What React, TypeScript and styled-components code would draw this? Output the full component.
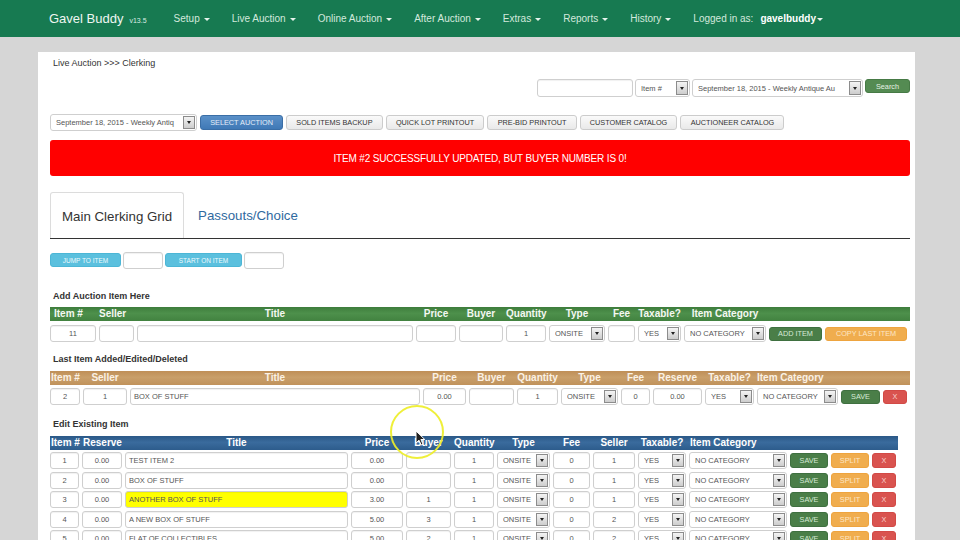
import React from 'react';
import styled, { createGlobalStyle, css } from 'styled-components';

const Global = createGlobalStyle`
  html, body { margin: 0; padding: 0; background: #d6d6d6; }
  body { font-family: "Liberation Sans", Arial, sans-serif; width: 960px; height: 540px; overflow: hidden; }
  * { box-sizing: border-box; }
`;

const Root = styled.div`
  position: relative;
  width: 960px;
  height: 540px;
  overflow: hidden;
`;

/* ---------- navbar ---------- */
const Nav = styled.nav`
  height: 37px;
  background: #177a51;
  display: flex;
  align-items: center;
  padding-left: 49px;
`;
const Brand = styled.div`
  display: flex;
  align-items: baseline;
  color: #eef6f1;
  font-size: 13px;
  margin-right: 16px;
`;
const Version = styled.span`
  font-size: 7px;
  margin-left: 6px;
  color: #d9ece2;
`;
const NavItem = styled.div`
  display: flex;
  align-items: center;
  gap: 4px;
  padding: 0 11px;
  font-size: 10px;
  color: #d3e9dd;
  white-space: nowrap;
  b { color: #ffffff; margin-left: 3px; }
`;
const Caret = styled.span<{ $tight?: boolean }>`
  display: inline-block;
  width: 0;
  height: 0;
  border-left: 3px solid transparent;
  border-right: 3px solid transparent;
  border-top: 3px solid #e6f3ec;
  margin-left: ${p => (p.$tight ? '-3px' : '0')};
  margin-top: 1px;
`;

/* ---------- page ---------- */
const Page = styled.div`
  padding: 15px 45px 0 38px;
`;
const Panel = styled.div`
  background: #ffffff;
  height: 500px;
  padding: 5px 5px 0 12px;
  display: flex;
  flex-direction: column;
`;
const Breadcrumb = styled.div`
  font-size: 9px;
  line-height: 12px;
  color: #333;
  padding-left: 3px;
`;
const SearchRow = styled.div`
  margin-top: 10px;
  display: flex;
  justify-content: flex-end;
  align-items: flex-start;
  gap: 2px;
  height: 18px;
`;
const Toolbar = styled.div`
  margin-top: 17px;
  display: flex;
  align-items: center;
  height: 17px;
  gap: 3px;
`;
const Alert = styled.div`
  margin-top: 9px;
  height: 36px;
  background: #ff0000;
  border-radius: 3px;
  color: #fff;
  font-size: 10px;
  display: flex;
  align-items: center;
  justify-content: center;
  letter-spacing: -0.15px;
`;
const TabBar = styled.div`
  margin-top: 16px;
  display: flex;
  border-bottom: 1px solid #333;
  height: 47px;
`;
const Tab = styled.div<{ $active?: boolean }>`
  height: 46px;
  line-height: 47px;
  padding: 0 ${p => (p.$active ? '11px' : '14px')};
  font-size: 13.3px;
  color: ${p => (p.$active ? '#333' : '#2f6aa0')};
  ${p =>
    p.$active &&
    css`
      border: 1px solid #dcdcdc;
      border-bottom: none;
      border-radius: 3px 3px 0 0;
      background: #fff;
    `}
`;
const JumpRow = styled.div`
  margin-top: 12px;
  display: flex;
  align-items: center;
  height: 18px;
  gap: 2px;
`;
const SectionTitle = styled.div<{ $mt: number }>`
  margin-top: ${p => p.$mt}px;
  font-size: 9px;
  line-height: 12px;
  font-weight: bold;
  color: #333;
  padding-left: 3px;
`;

/* ---------- grid tables ---------- */
const themes = {
  green: { bg: 'linear-gradient(#3e7d3c, #4d904b 45%, #428240)', fg: '#f4f8f2' },
  tan: { bg: 'linear-gradient(#bf8f57, #c99f6a 45%, #c0925b)', fg: '#fbf1e4' },
  blue: { bg: 'linear-gradient(#2a5887, #3a6b9d 45%, #2d5c8c)', fg: '#ffffff' },
};
type ThemeKey = keyof typeof themes;

const HeadBar = styled.div<{ $cols: string; $theme: ThemeKey; $mt: number; $w?: number }>`
  margin-top: ${p => p.$mt}px;
  height: 14px;
  width: ${p => (p.$w ? `${p.$w}px` : '100%')};
  display: grid;
  grid-template-columns: ${p => p.$cols};
  column-gap: 3px;
  align-items: center;
  background: ${p => themes[p.$theme].bg};
  color: ${p => themes[p.$theme].fg};
  font-size: 10px;
  font-weight: bold;
`;
const HeadCell = styled.div<{ $align?: 'left' | 'center'; $pad?: number }>`
  text-align: ${p => p.$align || 'center'};
  padding-left: ${p => p.$pad || 0}px;
  white-space: nowrap;
  line-height: 14px;
`;
const Row = styled.div<{ $cols: string; $mt: number; $h?: number }>`
  margin-top: ${p => p.$mt}px;
  height: ${p => p.$h || 17}px;
  display: grid;
  grid-template-columns: ${p => p.$cols};
  column-gap: 3px;
  align-items: center;
`;
const Rows = styled.div`
  display: flex;
  flex-direction: column;
  gap: 2px;
  margin-top: 2px;
`;

/* ---------- controls ---------- */
const Field = styled.input<{ $align?: 'left' | 'center'; $hl?: boolean; $w?: number; $h?: number }>`
  width: ${p => (p.$w ? `${p.$w}px` : '100%')};
  height: ${p => p.$h || 17}px;
  border: 1px solid #cfcfcf;
  border-radius: 3px;
  background: ${p => (p.$hl ? '#ffff00' : '#ffffff')};
  box-shadow: inset 0 1px 1px rgba(0, 0, 0, 0.06);
  font-family: "Liberation Sans", Arial, sans-serif;
  font-size: 7.5px;
  color: #555;
  text-align: ${p => p.$align || 'center'};
  padding: 0 ${p => (p.$align === 'left' ? '3px' : '2px')};
  outline: none;
  margin: 0;
`;
const SelectBox = styled.div<{ $w?: number; $h?: number }>`
  width: ${p => (p.$w ? `${p.$w}px` : '100%')};
  height: ${p => p.$h || 17}px;
  border: 1px solid #cfcfcf;
  border-radius: 3px;
  background: #fff;
  display: flex;
  align-items: center;
  padding: 1px 1px 1px 5px;
  font-size: 7.5px;
  color: #555;
  white-space: nowrap;
  span { flex: 1; overflow: hidden; text-overflow: clip; }
`;
const ArrowBtn = styled.div`
  flex: none;
  width: 12px;
  height: 100%;
  border: 1px solid #8c8c8c;
  background: linear-gradient(#f4f4f4, #cdcdcd);
  display: flex;
  align-items: center;
  justify-content: center;
  &::after {
    content: '';
    border-left: 2.5px solid transparent;
    border-right: 2.5px solid transparent;
    border-top: 3px solid #222;
  }
`;

const Select: React.FC<{ value: string; w?: number; h?: number }> = ({ value, w, h }) => (
  <SelectBox $w={w} $h={h}>
    <span>{value}</span>
    <ArrowBtn />
  </SelectBox>
);

const variants = {
  default: css`
    background: linear-gradient(#fafafa, #e9e9e9);
    border: 1px solid #cccccc;
    color: #333;
  `,
  primary: css`
    background: linear-gradient(#5a90c8, #4079b6);
    border: 1px solid #3a6ea6;
    color: #e4eef8;
  `,
  success: css`
    background: #4a7e48;
    border: 1px solid #3f7040;
    color: #d7ead6;
  `,
  search: css`
    background: #548b52;
    border: 1px solid #467a45;
    color: #e5f1e4;
  `,
  warning: css`
    background: #f0ad4e;
    border: 1px solid #eea43f;
    color: #fde6c6;
  `,
  danger: css`
    background: #d9534f;
    border: 1px solid #d24a46;
    color: #f7d0cf;
  `,
  info: css`
    background: #5bc0de;
    border: 1px solid #4cb6d6;
    color: #eef9fc;
  `,
};
type Variant = keyof typeof variants;

const Btn = styled.button<{ $v: Variant; $h?: number; $w?: number; $fs?: number; $caps?: boolean }>`
  ${p => variants[p.$v]}
  height: ${p => p.$h || 15}px;
  ${p => p.$w && `width: ${p.$w}px;`}
  padding: 0 9.2px;
  border-radius: 3px;
  font-family: "Liberation Sans", Arial, sans-serif;
  font-size: ${p => p.$fs || 7.3}px;
  text-transform: ${p => (p.$caps === false ? 'none' : 'uppercase')};
  white-space: nowrap;
  display: flex;
  align-items: center;
  justify-content: center;
  margin: 0;
`;

/* ---------- overlay (screen recording cursor highlight) ---------- */
const Highlight = styled.div`
  position: absolute;
  left: 390px;
  top: 405px;
  width: 54px;
  height: 54px;
  border-radius: 50%;
  border: 2.5px solid rgba(238, 238, 40, 0.92);
  pointer-events: none;
`;
const CursorIcon = styled.svg`
  position: absolute;
  left: 415px;
  top: 430px;
`;

/* ---------- data ---------- */
const addCols = '46px 35px 276px 40px 44px 40px 56px 27px 43px 82px 53px 82px';
const lastCols = '30px 44px 290px 43px 45px 41px 57px 29px 49px 49px 81px 39px 24px';
const editCols = '29px 40px 223px 52px 45px 40px 53px 37px 42px 48px 98px 38px 38px 24px';

type H = [string, ('left' | 'center')?, number?];
const addHeads: H[] = [
  ['Item #', 'left', 4], ['Seller', 'left', 0], ['Title'], ['Price'], ['Buyer'], ['Quantity'],
  ['Type'], ['Fee'], ['Taxable?'], ['Item Category'],
];
const lastHeads: H[] = [
  ['Item #', 'left', 1], ['Seller'], ['Title'], ['Price'], ['Buyer'], ['Quantity'], ['Type'],
  ['Fee'], ['Reserve'], ['Taxable?'], ['Item Category', 'left', 0],
];
const editHeads: H[] = [
  ['Item #', 'left', 1], ['Reserve', 'left', 1], ['Title'], ['Price'], ['Buyer'], ['Quantity'],
  ['Type'], ['Fee'], ['Seller'], ['Taxable?'], ['Item Category', 'left', 1],
];

const editRows = [
  { n: '1', title: 'TEST ITEM 2', price: '0.00', buyer: '', seller: '1' },
  { n: '2', title: 'BOX OF STUFF', price: '0.00', buyer: '', seller: '1' },
  { n: '3', title: 'ANOTHER BOX OF STUFF', price: '3.00', buyer: '1', seller: '1', hl: true },
  { n: '4', title: 'A NEW BOX OF STUFF', price: '5.00', buyer: '3', seller: '2' },
  { n: '5', title: 'FLAT OF COLLECTIBLES', price: '5.00', buyer: '2', seller: '2' },
];

const Heads: React.FC<{ heads: H[] }> = ({ heads }) => (
  <>
    {heads.map(([t, a, p]) => (
      <HeadCell key={t} $align={a} $pad={p}>
        {t}
      </HeadCell>
    ))}
  </>
);

const navItems = ['Setup', 'Live Auction', 'Online Auction', 'After Auction', 'Extras', 'Reports', 'History'];

export default function App() {
  return (
    <Root>
      <Global />
      <Nav>
        <Brand>
          Gavel Buddy<Version>v13.5</Version>
        </Brand>
        {navItems.map(n => (
          <NavItem key={n}>
            {n}
            <Caret />
          </NavItem>
        ))}
        <NavItem>
          Logged in as:<b>gavelbuddy</b>
          <Caret $tight />
        </NavItem>
      </Nav>

      <Page>
        <Panel>
          <Breadcrumb>Live Auction &gt;&gt;&gt; Clerking</Breadcrumb>

          <SearchRow>
            <Field readOnly defaultValue="" $w={96} $h={18} />
            <Select value="Item #" w={55} h={18} />
            <Select value="September 18, 2015 - Weekly Antique Au" w={171} h={18} />
            <Btn $v="search" $h={14} $w={45} $caps={false}>
              Search
            </Btn>
          </SearchRow>

          <Toolbar>
            <Select value="September 18, 2015 - Weekly Antiq" w={147} h={17} />
            <Btn $v="primary">Select Auction</Btn>
            <Btn $v="default">Sold Items Backup</Btn>
            <Btn $v="default">Quick Lot Printout</Btn>
            <Btn $v="default">Pre-Bid Printout</Btn>
            <Btn $v="default">Customer Catalog</Btn>
            <Btn $v="default">Auctioneer Catalog</Btn>
          </Toolbar>

          <Alert>ITEM #2 SUCCESSFULLY UPDATED, BUT BUYER NUMBER IS 0!</Alert>

          <TabBar>
            <Tab $active>Main Clerking Grid</Tab>
            <Tab>Passouts/Choice</Tab>
          </TabBar>

          <JumpRow>
            <Btn $v="info" $h={14} $w={71} $fs={6.5}>Jump to item</Btn>
            <Field readOnly defaultValue="" $w={40} />
            <Btn $v="info" $h={14} $w={77} $fs={6.5}>Start on item</Btn>
            <Field readOnly defaultValue="" $w={40} />
          </JumpRow>

          <SectionTitle $mt={21}>Add Auction Item Here</SectionTitle>
          <HeadBar $cols={addCols} $theme="green" $mt={5}>
            <Heads heads={addHeads} />
          </HeadBar>
          <Row $cols={addCols} $mt={4}>
            <Field readOnly defaultValue="11" />
            <Field readOnly defaultValue="" />
            <Field readOnly defaultValue="" $align="left" />
            <Field readOnly defaultValue="" />
            <Field readOnly defaultValue="" />
            <Field readOnly defaultValue="1" />
            <Select value="ONSITE" />
            <Field readOnly defaultValue="" />
            <Select value="YES" />
            <Select value="NO CATEGORY" />
            <Btn $v="success" $h={14}>Add Item</Btn>
            <Btn $v="warning" $h={14}>Copy Last Item</Btn>
          </Row>

          <SectionTitle $mt={11}>Last Item Added/Edited/Deleted</SectionTitle>
          <HeadBar $cols={lastCols} $theme="tan" $mt={6}>
            <Heads heads={lastHeads} />
          </HeadBar>
          <Row $cols={lastCols} $mt={3}>
            <Field readOnly defaultValue="2" />
            <Field readOnly defaultValue="1" />
            <Field readOnly defaultValue="BOX OF STUFF" $align="left" />
            <Field readOnly defaultValue="0.00" />
            <Field readOnly defaultValue="" />
            <Field readOnly defaultValue="1" />
            <Select value="ONSITE" />
            <Field readOnly defaultValue="0" />
            <Field readOnly defaultValue="0.00" />
            <Select value="YES" />
            <Select value="NO CATEGORY" />
            <Btn $v="success" $h={14}>Save</Btn>
            <Btn $v="danger" $h={14}>X</Btn>
          </Row>

          <SectionTitle $mt={13}>Edit Existing Item</SectionTitle>
          <HeadBar $cols={editCols} $theme="blue" $mt={6} $w={848}>
            <Heads heads={editHeads} />
          </HeadBar>
          <Rows>
            {editRows.map(r => (
              <Row key={r.n} $cols={editCols} $mt={0} $h={17.5}>
                <Field readOnly defaultValue={r.n} />
                <Field readOnly defaultValue="0.00" />
                <Field readOnly defaultValue={r.title} $align="left" $hl={r.hl} />
                <Field readOnly defaultValue={r.price} />
                <Field readOnly defaultValue={r.buyer} />
                <Field readOnly defaultValue="1" />
                <Select value="ONSITE" />
                <Field readOnly defaultValue="0" />
                <Field readOnly defaultValue={r.seller} />
                <Select value="YES" />
                <Select value="NO CATEGORY" />
                <Btn $v="success" $h={15}>Save</Btn>
                <Btn $v="warning" $h={15}>Split</Btn>
                <Btn $v="danger" $h={15}>X</Btn>
              </Row>
            ))}
          </Rows>
        </Panel>
      </Page>

      <Highlight />
      <CursorIcon width="11" height="16" viewBox="0 0 11 16">
        <path d="M1 1 L1 13 L4 10.2 L6.2 15 L8 14.2 L5.9 9.5 L9.8 9.5 Z" fill="#222" stroke="#fff" strokeWidth="1" />
      </CursorIcon>
    </Root>
  );
}
